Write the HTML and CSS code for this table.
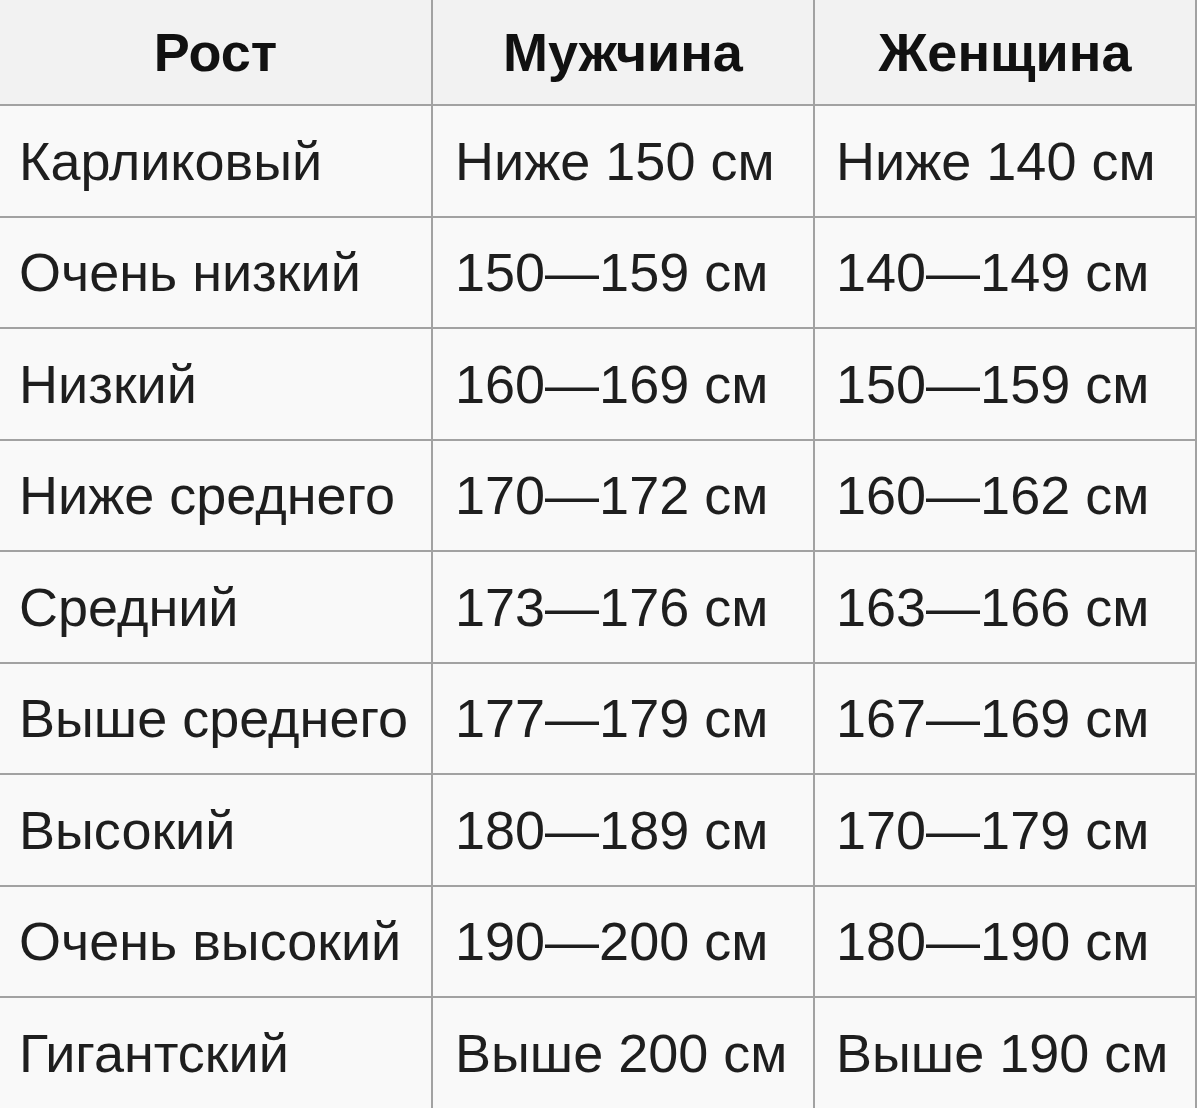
FILE: index.html
```html
<!DOCTYPE html>
<html lang="ru">
<head>
<meta charset="utf-8">
<title>Рост</title>
<link rel="stylesheet" href="styles.css">
</head>
<body>
<div class="table">
  <div class="cell head c1">Рост</div>
  <div class="cell head c2">Мужчина</div>
  <div class="cell head c3">Женщина</div>

  <div class="cell c1">Карликовый</div>
  <div class="cell c2">Ниже 150 см</div>
  <div class="cell c3">Ниже 140 см</div>

  <div class="cell c1">Очень низкий</div>
  <div class="cell c2">150—159 см</div>
  <div class="cell c3">140—149 см</div>

  <div class="cell c1">Низкий</div>
  <div class="cell c2">160—169 см</div>
  <div class="cell c3">150—159 см</div>

  <div class="cell c1">Ниже среднего</div>
  <div class="cell c2">170—172 см</div>
  <div class="cell c3">160—162 см</div>

  <div class="cell c1">Средний</div>
  <div class="cell c2">173—176 см</div>
  <div class="cell c3">163—166 см</div>

  <div class="cell c1">Выше среднего</div>
  <div class="cell c2">177—179 см</div>
  <div class="cell c3">167—169 см</div>

  <div class="cell c1">Высокий</div>
  <div class="cell c2">180—189 см</div>
  <div class="cell c3">170—179 см</div>

  <div class="cell c1">Очень высокий</div>
  <div class="cell c2">190—200 см</div>
  <div class="cell c3">180—190 см</div>

  <div class="cell c1">Гигантский</div>
  <div class="cell c2">Выше 200 см</div>
  <div class="cell c3">Выше 190 см</div>
</div>
</body>
</html>
```

FILE: styles.css
```css
html, body {
  margin: 0;
  padding: 0;
  background: #ffffff;
}

body {
  width: 1200px;
  height: 1108px;
  overflow: hidden;
  font-family: "Liberation Sans", Arial, sans-serif;
  color: #1e1e1e;
}

.table {
  display: grid;
  grid-template-columns: 433px 382px 382px;
  grid-template-rows: 106px repeat(9, 111.5px);
  background: #f9f9f9;
  width: 1197px;
}

.cell {
  box-sizing: border-box;
  border-right: 2px solid #a2a2a2;
  border-bottom: 2px solid #a2a2a2;
  display: flex;
  align-items: center;
  font-size: 54px;
  white-space: nowrap;
  background: #f9f9f9;
}

.c1 { padding-left: 19px; }
.c2 { padding-left: 22px; }
.c3 { padding-left: 21px; }

.head {
  background: #f2f2f2;
  font-weight: bold;
  justify-content: center;
  padding-left: 0;
  color: #111111;
}
```
